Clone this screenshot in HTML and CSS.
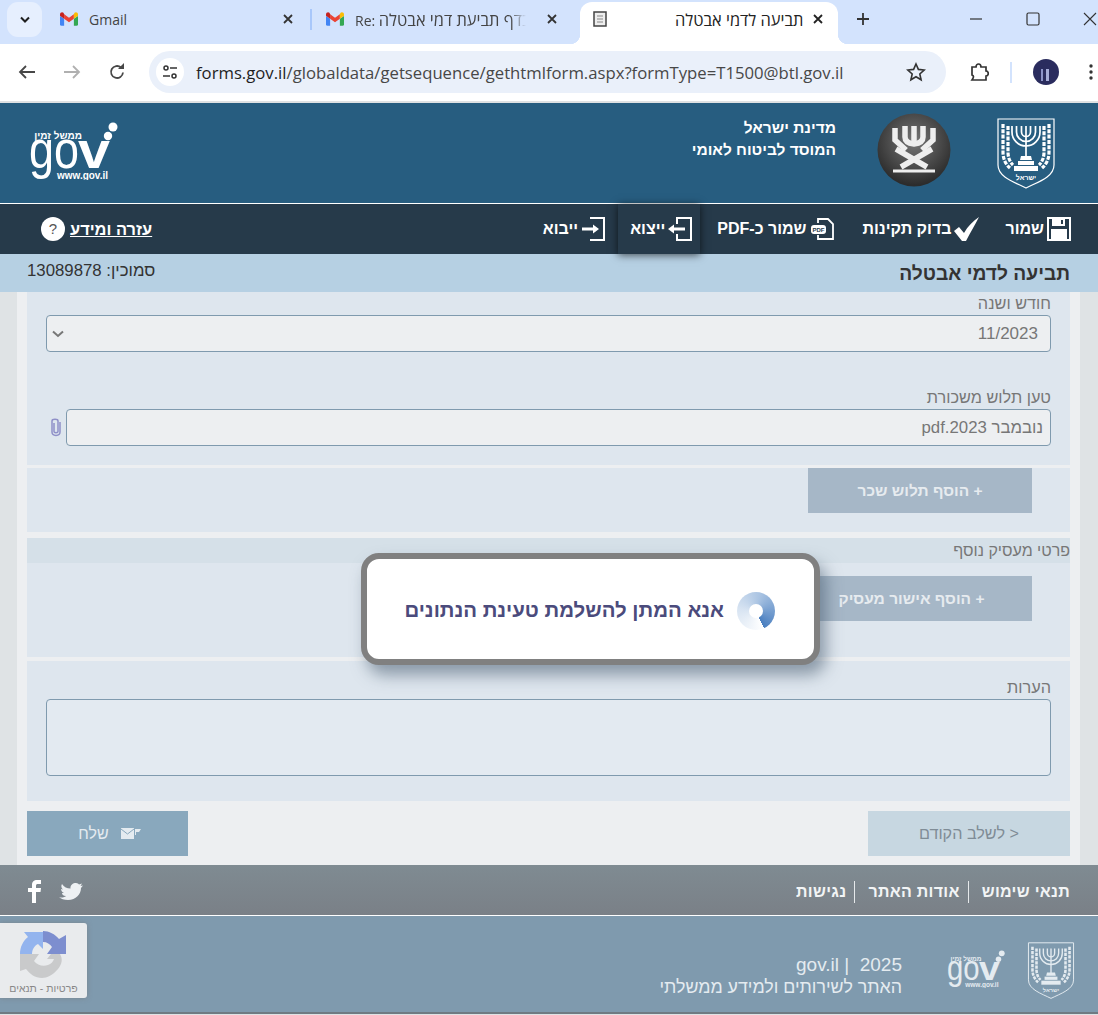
FILE: index.html
```html
<!DOCTYPE html>
<html lang="he">
<head>
    <meta charset="UTF-8">
    <title>תביעה לדמי אבטלה</title>
    <link rel="stylesheet" href="styles.css">
</head>
<body>
    <svg class="defs" width="0" height="0">
        <symbol id="emblem" viewBox="0 0 58 72">
            <path d="M1 1H57V47C57 59 41 64 29 70C17 64 1 59 1 47Z" fill="none" stroke="currentColor" stroke-width="1.2"/>
            <g fill="none" stroke="currentColor" stroke-width="1.7">
                <path d="M29 8V40"/>
                <path d="M24.500 8V14A4.500 4.500 0 0 0 33.500 14V8"/>
                <path d="M19.500 8V14A9.500 9.500 0 0 0 38.500 14V8"/>
                <path d="M15 8V14A14 14 0 0 0 43 14V8"/>
            </g>
            <g fill="none" stroke="currentColor" stroke-width="3.200" stroke-dasharray="4 1.300">
                <path d="M6 6V34Q6 44 13 50"/>
                <path d="M11 8V34Q11 42 16 47"/>
                <path d="M52 6V34Q52 44 45 50"/>
                <path d="M47 8V34Q47 42 42 47"/>
            </g>
            <g fill="currentColor">
                <path d="M24 38H34L35 42H23Z"/>
                <path d="M21 43H37V47H21Z"/>
                <path d="M17 48H41V53H17Z"/>
                <text x="29" y="62" class="emblem-text" text-anchor="middle">ישראל</text>
            </g>
        </symbol>
        <symbol id="gov" viewBox="0 0 89 58">
            <g fill="currentColor">
                <text x="0" y="46" class="gov-thin" textLength="50" lengthAdjust="spacingAndGlyphs">go</text>
                <text x="49" y="46" class="gov-bold" textLength="32" lengthAdjust="spacingAndGlyphs">v</text>
                <circle cx="79" cy="14" r="4.200"/>
                <circle cx="84" cy="5" r="4.500"/>
                <text x="53" y="17" class="gov-small">ממשל זמין</text>
                <text x="28" y="57" class="gov-www" textLength="51" lengthAdjust="spacingAndGlyphs">www.gov.il</text>
            </g>
        </symbol>
        <symbol id="gmail" viewBox="0 0 24 18">
            <path d="M0 5V16A2 2 0 0 0 2 18H5.500V8.500Z" fill="#4285f4"/>
            <path d="M24 5V16A2 2 0 0 1 22 18H18.500V8.500Z" fill="#34a853"/>
            <path d="M5.500 8.500 12 13.400 18.500 8.500V2.500L12 7.400 5.500 2.500Z" fill="#ea4335"/>
            <path d="M18.500 2.500V8.500L24 4.500V3C24 .5 21.200-.8 19.400.8Z" fill="#fbbc04"/>
            <path d="M5.500 2.500V8.500L0 4.500V3C0 .5 2.800-.8 4.600.8Z" fill="#c5221f"/>
        </symbol>
    </svg>

    <div class="browser">
        <div class="tabstrip">
            <div class="tab-search">
                <svg width="12" height="8" viewBox="0 0 12 8"><path d="M2 1.500 6 5.500 10 1.500" fill="none" stroke="#1f1f1f" stroke-width="2"/></svg>
            </div>
            <div class="tab tab-gmail">
                <svg class="tab-icon" width="18" height="14"><use href="#gmail"/></svg>
                <span class="tab-title">Gmail</span>
                <svg class="tab-close" width="10" height="10" viewBox="0 0 10 10"><path d="M1 1 9 9M9 1 1 9" stroke="#333" stroke-width="1.800"/></svg>
            </div>
            <div class="tab-sep"></div>
            <div class="tab tab-re">
                <svg class="tab-icon" width="18" height="14"><use href="#gmail"/></svg>
                <span class="tab-title">Re: <span class="tab-he">בדף תביעת דמי אבטלה</span></span>
                <svg class="tab-close" width="10" height="10" viewBox="0 0 10 10"><path d="M1 1 9 9M9 1 1 9" stroke="#333" stroke-width="1.800"/></svg>
            </div>
            <div class="tab tab-active">
                <svg class="tab-doc" width="14" height="16" viewBox="0 0 14 16"><path d="M1 1H13V15H1Z" fill="#eee" stroke="#444" stroke-width="1.500"/><path d="M4 5H10M4 8H10M4 11H10" stroke="#888"/></svg>
                <span class="tab-title tab-he tab-active-title">תביעה לדמי אבטלה</span>
                <svg class="tab-close" width="10" height="10" viewBox="0 0 10 10"><path d="M1 1 9 9M9 1 1 9" stroke="#222" stroke-width="1.800"/></svg>
            </div>
            <svg class="tab-plus" width="14" height="14" viewBox="0 0 14 14"><path d="M7 1V13M1 7H13" stroke="#333" stroke-width="1.800"/></svg>
            <div class="window-btns">
                <svg width="14" height="14" viewBox="0 0 14 14"><path d="M1 7H13" stroke="#333" stroke-width="1.200"/></svg>
                <svg width="14" height="14" viewBox="0 0 14 14"><rect x="1" y="1" width="12" height="12" rx="1.500" fill="none" stroke="#333" stroke-width="1.200"/></svg>
                <svg width="14" height="14" viewBox="0 0 14 14"><path d="M1 1 13 13M13 1 1 13" stroke="#333" stroke-width="1.100"/></svg>
            </div>
        </div>
        <div class="toolbar">
            <svg class="tool-back" width="18" height="16" viewBox="0 0 18 16"><path d="M17 8H2M8 2 2 8 8 14" fill="none" stroke="#474747" stroke-width="1.800"/></svg>
            <svg class="tool-fwd" width="18" height="16" viewBox="0 0 18 16"><path d="M1 8H16M10 2 16 8 10 14" fill="none" stroke="#b0b0b0" stroke-width="1.800"/></svg>
            <svg class="tool-reload" width="18" height="18" viewBox="0 0 18 18"><path d="M15 9.500A6 6 0 1 1 13 4.500" fill="none" stroke="#474747" stroke-width="1.800"/><path d="M10 6H16V0Z" fill="#474747"/></svg>
            <div class="omnibox">
                <div class="site-icon">
                    <svg width="16" height="16" viewBox="0 0 16 16"><g fill="none" stroke="#333" stroke-width="1.500"><circle cx="4" cy="4" r="2"/><path d="M8 4H15M1 12H8"/><circle cx="12" cy="12" r="2"/></g></svg>
                </div>
                <div class="url"><span class="url-host">forms.gov.il</span>/globaldata/getsequence/gethtmlform.aspx?formType=T1500@btl.gov.il</div>
                <svg class="star" width="20" height="20" viewBox="0 0 20 20"><path d="M10 2 12.400 7.400 18.200 8 13.800 12 15.100 17.800 10 14.800 4.900 17.800 6.200 12 1.800 8 7.600 7.400Z" fill="none" stroke="#333" stroke-width="1.600"/></svg>
            </div>
            <svg class="ext" width="20" height="20" viewBox="0 0 20 20"><path d="M3 5H7C7 1 12 1 12 5H17V9C20 9 20 14 17 14V18H3C5 15 5 14 3 13Z" fill="none" stroke="#333" stroke-width="1.700"/></svg>
            <div class="tool-sep"></div>
            <div class="avatar"></div>
            <svg class="menu-dots" width="4" height="18" viewBox="0 0 4 18"><circle cx="2" cy="3" r="1.700" fill="#333"/><circle cx="2" cy="9" r="1.700" fill="#333"/><circle cx="2" cy="15" r="1.700" fill="#333"/></svg>
        </div>
    </div>

    <div class="page" dir="rtl">
        <header class="site-header">
            <svg class="logo-emblem" width="58" height="72"><use href="#emblem"/></svg>
            <svg class="logo-btl" width="74" height="74" viewBox="0 0 74 74">
                <defs>
                    <radialGradient id="btlGrad" cx="50%" cy="38%" r="60%">
                        <stop offset="0" stop-color="#777"/>
                        <stop offset="1" stop-color="#2c2c2c"/>
                    </radialGradient>
                </defs>
                <circle cx="37" cy="37" r="36.500" fill="url(#btlGrad)"/>
                <g fill="none" stroke="#eee" stroke-width="5.500">
                    <path d="M18 15V27L29 37"/>
                    <path d="M56 15V27L45 37"/>
                    <path d="M37 13V29"/>
                    <path d="M28 13V24Q28 30 37 31Q46 30 46 24V13"/>
                    <path d="M19 36 50 54"/>
                    <path d="M55 36 24 54"/>
                </g>
                <path d="M16 58H58" stroke="#eee" stroke-width="3"/>
            </svg>
            <div class="org-name">
                <div>מדינת ישראל</div>
                <div>המוסד לביטוח לאומי</div>
            </div>
            <svg class="logo-gov" width="89" height="58"><use href="#gov"/></svg>
        </header>

        <nav class="actions">
            <a class="action action-save">
                <svg width="24" height="24" viewBox="0 0 24 24"><path d="M1 1H23V23H1Z" fill="none" stroke="#fff" stroke-width="2"/><path d="M5 1H18V9H5Z" fill="#fff"/><path d="M14 3H16V7H14Z" fill="#263a4a"/><path d="M4 12H20V22H4Z" fill="#fff"/></svg>
                שמור
            </a>
            <a class="action action-check">
                <svg width="26" height="26" viewBox="0 0 26 26"><path d="M0 15 5 11 10 17C14 10 19 5 25 1 21 9 16 17 12 25H8Z" fill="#fff"/></svg>
                בדוק תקינות
            </a>
            <a class="action action-pdf">
                <svg width="24" height="22" viewBox="0 0 24 22"><path d="M8 5V1H18L23 6V21H8V17" fill="none" stroke="#fff" stroke-width="1.800"/><rect x="1" y="7" width="15" height="9" rx="3" fill="#fff"/><text x="8.500" y="14" class="pdf-text" text-anchor="middle">PDF</text></svg>
                שמור כ-PDF
            </a>
            <a class="action action-export">
                <svg width="24" height="24" viewBox="0 0 24 24"><path d="M9 7V1H23V23H9V17" fill="none" stroke="#fff" stroke-width="2"/><path d="M0 12 6 7.500V10.500H17V13.500H6V16.500Z" fill="#fff"/></svg>
                ייצוא
            </a>
            <a class="action action-import">
                <svg width="24" height="24" viewBox="0 0 24 24"><path d="M9 1H23V23H9" fill="none" stroke="#fff" stroke-width="2"/><path d="M18 12 12 7.500V10.500H1V13.500H12V16.500Z" fill="#fff"/></svg>
                ייבוא
            </a>
            <a class="help"><span class="help-text">עזרה ומידע</span><span class="help-icon">?</span></a>
        </nav>

        <div class="title-bar">
            <h1>תביעה לדמי אבטלה</h1>
            <div class="ref-num">סמוכין: <span dir="ltr">13089878</span></div>
        </div>

        <main class="content">
            <section class="panel panel-fields">
                <label class="field-label">חודש ושנה</label>
                <div class="input input-select">
                    <span>11/2023</span>
                    <svg width="12" height="8" viewBox="0 0 12 8"><path d="M1 1.500 6 6 11 1.500" fill="none" stroke="#777" stroke-width="2"/></svg>
                </div>
                <label class="field-label field-second">טען תלוש משכורת</label>
                <div class="file-row">
                    <div class="input input-file">נובמבר 2023.pdf</div>
                    <svg class="clip" width="12" height="19" viewBox="0 0 12 19"><path d="M4 5V13.500C4 15 8 15 8 13.500V3C8 .8 2 .8 2 3V14C2 18.500 10 18.500 10 14V4" fill="none" stroke="#8f90c8" stroke-width="1.500"/></svg>
                </div>
            </section>

            <section class="panel panel-add">
                <div class="add-btn">+ הוסף תלוש שכר</div>
            </section>

            <h2 class="section-title">פרטי מעסיק נוסף</h2>
            <section class="panel panel-employer">
                <div class="add-btn add-btn-wide">+ הוסף אישור מעסיק</div>
            </section>

            <section class="panel panel-notes">
                <label class="field-label">הערות</label>
                <div class="textarea"></div>
            </section>

            <div class="form-btns">
                <div class="btn-prev">&lt; לשלב הקודם</div>
                <div class="btn-send">
                    <svg width="20" height="11" viewBox="0 0 20 11"><path d="M0 0H13V11H0Z" fill="#e4ebf0"/><path d="M0 1 6.500 6 13 1" fill="none" stroke="#89a8bd"/><path d="M14 1H20L18 4H15V7H14Z" fill="#e4ebf0"/></svg>
                    <span>שלח</span>
                </div>
            </div>
        </main>

        <div class="footer-links">
            <a>תנאי שימוש</a>
            <a>אודות האתר</a>
            <a>נגישות</a>
            <div class="social">
                <svg width="24" height="17" viewBox="0 0 24 17"><path d="M0 14C3 15 5 14.500 7 13 4 13 3 11 3 10H5C3 9 2 7.500 2 6L4 6.500C2 5 2 2.500 3 1 5 4 8 5.500 11.500 5.500 11 2 14 0 17 0 18.500 0 19.500 1 20 1.500L23 .5 21.500 3 24 2.500 22 5C22 11 17 17 9 17 5 17 2 16 0 14Z" fill="#eef1f3"/></svg>
                <svg width="13" height="23" viewBox="0 0 13 23"><path d="M4 23V12H0V8H4V5C4 1.500 6 0 9 0H13V4H10C8.500 4 8 4.500 8 6V8H13L12.500 12H8V23Z" fill="#fff"/></svg>
            </div>
        </div>

        <footer class="site-footer">
            <svg class="footer-emblem" width="48" height="58"><use href="#emblem"/></svg>
            <svg class="footer-gov" width="58" height="38"><use href="#gov"/></svg>
            <div class="footer-text">
                <div class="footer-year"><span dir="ltr">gov.il |&nbsp; 2025</span></div>
                <div>האתר לשירותים ולמידע ממשלתי</div>
            </div>
        </footer>
    </div>

    <div class="recaptcha">
        <svg width="46" height="47" viewBox="0 0 46 47">
            <path d="M0 23C0 16 3 10 8 6L4 1H23V18L18 13C14 15 12 19 12 23Z" fill="#93b4ee"/>
            <path d="M23 0C29 0 35 3 39 8L46 4V23H27L32 16C30 13 27 11 23 11Z" fill="#7d8ecf"/>
            <path d="M0 23H19L14 30C17 34 23 36 28 34 31 33 33 31 34 28H27L31 23H40C43 28 42 33 38 38 33 44 27 47 22 47 15 47 10 43 6 38L0 40Z" fill="#c9cacb"/>
        </svg>
        <div class="recaptcha-text" dir="rtl">פרטיות - תנאים</div>
    </div>

    <div class="loading" dir="rtl">
        <div class="spinner"></div>
        <div class="loading-text">אנא המתן להשלמת טעינת הנתונים</div>
    </div>
</body>
</html>
```

FILE: styles.css
```css
html, body {
    margin: 0;
    padding: 0;
    height: 1015px;
    overflow: hidden;
    background: #dfe3e5;
    font-family: "Liberation Sans", Arial, sans-serif;
}
.defs {
    position: absolute;
}

/* browser chrome */
.browser {
    height: 103px;
    background: #fff;
}
.tabstrip {
    display: flex;
    align-items: flex-start;
    height: 44px;
    background: #d3e3fd;
    overflow: hidden;
}
.tab-search {
    display: flex;
    align-items: center;
    justify-content: center;
    width: 35px;
    height: 35px;
    margin: 2px 0 0 7px;
    background: #e6effe;
    border-radius: 11px;
}
.tab {
    display: flex;
    align-items: center;
    height: 42px;
    margin-top: 2px;
    box-sizing: border-box;
    font-family: "Open Sans", "Liberation Sans", sans-serif;
    font-size: 14px;
    color: #444;
}
.tab-gmail {
    width: 235px;
    margin-left: 18px;
    padding: 0 2px 8px 0;
}
.tab-icon {
    flex: none;
}
.tab-title {
    margin-left: 11px;
    white-space: nowrap;
}
.tab-close {
    flex: none;
    margin-left: auto;
}
.tab-sep {
    width: 2px;
    height: 21px;
    margin: 9px 0 0 15px;
    background: #a8c7fa;
}
.tab-re {
    width: 241px;
    margin-left: 14px;
    padding: 0 10px 8px 0;
}
.tab-re .tab-title {
    width: 171px;
    overflow: hidden;
    -webkit-mask-image: linear-gradient(to left, transparent, #000 16px);
    mask-image: linear-gradient(to left, transparent, #000 16px);
}
.tab-active {
    position: relative;
    width: 258px;
    margin-left: 13px;
    padding: 0 15px 8px 13px;
    background: #fff;
    border-radius: 12px 12px 0 0;
    color: #222;
}
.tab-active::before,
.tab-active::after {
    content: "";
    position: absolute;
    bottom: 0;
    width: 10px;
    height: 10px;
}
.tab-active::before {
    left: -10px;
    background: radial-gradient(circle at 0 0, transparent 10px, #fff 10.500px);
}
.tab-active::after {
    right: -10px;
    background: radial-gradient(circle at 100% 0, transparent 10px, #fff 10.500px);
}
.tab-he {
    font-size: 16.400px;
}
.tab-active-title {
    margin-left: 68px;
}
.tab-plus {
    margin: 12px 0 0 18px;
}
.window-btns {
    display: flex;
    gap: 43px;
    margin: 12px 0 0 99px;
}
.window-btns svg {
    flex: none;
}
.toolbar {
    display: flex;
    align-items: center;
    height: 59px;
    padding-bottom: 1px;
    box-sizing: border-box;
    background: #fff;
    border-bottom: 2px solid #dfe1e3;
    overflow: hidden;
}
.tool-back {
    margin-left: 18px;
}
.tool-fwd {
    margin-left: 27px;
}
.tool-reload {
    margin-left: 27px;
}
.omnibox {
    display: flex;
    align-items: center;
    width: 797px;
    height: 42px;
    margin-left: 23px;
    box-sizing: border-box;
    padding: 0 20px 0 7px;
    background: #eaf0fa;
    border-radius: 21px;
}
.site-icon {
    display: flex;
    align-items: center;
    justify-content: center;
    width: 28px;
    height: 28px;
    background: #fff;
    border-radius: 50%;
}
.url {
    margin-left: 12px;
    font-family: "Open Sans", "Noto Sans", sans-serif;
    font-size: 16.700px;
    color: #474747;
    white-space: nowrap;
}
.url-host {
    color: #1f1f1f;
}
.star {
    margin-left: auto;
}
.ext {
    margin-left: 23px;
}
.tool-sep {
    width: 2px;
    height: 21px;
    margin-left: 21px;
    background: #d3e3fd;
}
.avatar {
    width: 26px;
    height: 26px;
    margin-left: 21px;
    border-radius: 50%;
    background:
        linear-gradient(90deg, transparent 30%, #8c93c8 30%, #8c93c8 40%, transparent 40%, transparent 50%, #a6add8 50%, #a6add8 60%, transparent 60%) 0 10px / 100% 12px no-repeat,
        #2a2c5e;
}
.menu-dots {
    margin-left: 30px;
}

/* site header */
.site-header {
    display: flex;
    align-items: center;
    height: 100px;
    padding: 0 43px 0 29px;
    background: #275d80;
    color: #fff;
}
.logo-emblem {
    flex: none;
    margin-top: 1px;
}
.logo-btl {
    flex: none;
    margin-right: 46px;
    margin-top: -6px;
}
.org-name {
    margin-right: 41px;
    margin-top: -29px;
    font-size: 15.500px;
    font-weight: bold;
    line-height: 22px;
}
.logo-gov {
    flex: none;
    margin-right: auto;
    margin-top: -5px;
}
.emblem-text {
    font-size: 7px;
    font-weight: bold;
}
.gov-thin {
    direction: ltr;
    font-family: "Liberation Sans", sans-serif;
    font-size: 54px;
}
.gov-bold {
    direction: ltr;
    font-weight: bold;
    font-size: 52px;
}
.gov-small {
    direction: rtl;
    font-size: 10px;
    font-weight: bold;
}
.gov-www {
    direction: ltr;
    font-size: 10px;
    font-weight: bold;
}
.pdf-text {
    direction: ltr;
    fill: #263a4a;
    font-size: 6px;
    font-weight: bold;
}

/* action bar */
.actions {
    display: flex;
    align-items: stretch;
    height: 50px;
    margin-top: 1px;
    padding: 0 27px 0 41px;
    background: #263a4a;
    box-shadow: 0 -1px 0 #fff;
    color: #fff;
    font-size: 16px;
    font-weight: bold;
}
.action {
    display: flex;
    align-items: center;
    gap: 3px;
    white-space: nowrap;
}
.action-check {
    margin-right: 25px;
}
.action-pdf {
    margin-right: 29px;
}
.action-export {
    margin-right: 17px;
    padding: 0 8px 0 12px;
    background: #263a4a;
    box-shadow: 0 1px 8px rgba(0, 0, 0, .65);
}
.action-import {
    margin-right: 13px;
}
.help {
    display: flex;
    align-items: center;
    gap: 5px;
    margin-right: auto;
    font-size: 16.400px;
}
.help-text {
    text-decoration: underline;
}
.help-icon {
    width: 24px;
    height: 24px;
    border-radius: 50%;
    background: #fff;
    color: #555;
    font-weight: normal;
    font-size: 15px;
    line-height: 24px;
    text-align: center;
}

/* title */
.title-bar {
    display: flex;
    justify-content: space-between;
    height: 38px;
    padding: 0 28px 0 27px;
    background: #b6d0e3;
    color: #333;
}
.title-bar h1 {
    margin: 9px 0 0;
    font-size: 19.200px;
    line-height: 22px;
}
.ref-num {
    margin-top: 7px;
    font-size: 16.800px;
    line-height: 20px;
}

/* form */
.content {
    height: 573px;
    box-sizing: border-box;
    margin: 0 18px 0 17px;
    padding: 0 10px;
    background: #edeff1;
}
.panel {
    background: #dee6ee;
    box-sizing: border-box;
}
.panel-fields {
    height: 173px;
    padding: 0 19px;
}
.field-label {
    display: block;
    height: 23px;
    font-size: 16.300px;
    line-height: 22px;
    color: #777;
}
.field-second {
    margin-top: 34px;
}
.input {
    height: 37px;
    box-sizing: border-box;
    padding: 0 12px;
    background: #edeff1;
    border: 1px solid #7f9aae;
    border-radius: 4px;
    font-size: 17px;
    line-height: 35px;
    color: #777;
}
.input-select {
    display: flex;
    justify-content: space-between;
    align-items: center;
    padding-left: 5px;
}
.file-row {
    display: flex;
    align-items: center;
}
.input-file {
    flex: 1;
    padding: 0 7px;
    font-size: 16.800px;
}
.clip {
    flex: none;
    width: 20px;
}
.panel-add {
    height: 64px;
    margin-top: 3px;
    padding-right: 38px;
}
.add-btn {
    width: 224px;
    height: 45px;
    background: #a6b7c7;
    color: #e6ebef;
    font-size: 15.500px;
    font-weight: bold;
    line-height: 45px;
    text-align: center;
}
.add-btn-wide {
    width: 241px;
}
.section-title {
    height: 25px;
    margin: 6px 0 0;
    background: #d5e0e8;
    color: #777;
    font-size: 16px;
    font-weight: normal;
    line-height: 25px;
}
.panel-employer {
    height: 94px;
    padding: 13px 38px 0 0;
}
.panel-notes {
    height: 140px;
    margin-top: 4px;
    padding: 15px 19px 0;
}
.textarea {
    height: 77px;
    box-sizing: border-box;
    background: #e3eaf1;
    border: 1px solid #7f9aae;
    border-radius: 4px;
}
.form-btns {
    display: flex;
    justify-content: space-between;
    margin-top: 10px;
}
.btn-prev {
    width: 202px;
    height: 45px;
    background: #c7d7e1;
    color: #7f8c96;
    font-size: 16.200px;
    line-height: 45px;
    text-align: center;
}
.btn-send {
    display: flex;
    align-items: center;
    justify-content: center;
    gap: 12px;
    width: 161px;
    height: 45px;
    padding-left: 4px;
    box-sizing: border-box;
    background: #89a8bd;
    color: #e4ebf0;
    font-size: 16px;
}

/* footers */
.footer-links {
    display: flex;
    align-items: center;
    height: 51px;
    padding: 3px 28px 0 28px;
    box-sizing: border-box;
    background: linear-gradient(#7f8b92, #7a8087);
    border-bottom: 1px solid #fff;
    color: #f2f4f5;
    font-size: 16px;
    font-weight: bold;
    letter-spacing: .3px;
}
.footer-links a {
    padding: 0 8px 0 13px;
    border-left: 1px solid #e6e9eb;
    line-height: 22px;
}
.footer-links a:first-child {
    padding-right: 0;
}
.footer-links a:nth-child(3) {
    border-left: 0;
}
.social {
    display: flex;
    align-items: center;
    gap: 18px;
    margin-right: auto;
}
.site-footer {
    display: flex;
    align-items: center;
    height: 98px;
    padding: 0 23px 0 0;
    box-sizing: border-box;
    background: #7f9aae;
    border-bottom: 2px solid #6f7a82;
    color: #e4ebf0;
}
.footer-emblem {
    flex: none;
    margin-top: 14px;
}
.footer-gov {
    flex: none;
    margin-right: 22px;
    margin-top: 10px;
}
.footer-text {
    margin-right: 45px;
    margin-top: 23px;
    font-size: 17.800px;
    line-height: 22px;
}
.footer-year {
    font-size: 19px;
}

/* things lying over the page */
.recaptcha {
    position: absolute;
    left: 0;
    top: 923px;
    width: 87px;
    height: 75px;
    padding-top: 8px;
    box-sizing: border-box;
    background: #e9ebed;
    border-radius: 0 3px 3px 0;
    box-shadow: 0 0 5px rgba(120, 120, 120, .6);
    text-align: center;
}
.recaptcha svg {
    display: block;
    margin-left: 20px;
}
.recaptcha-text {
    margin-top: 4px;
    font-size: 10.500px;
    color: #888;
}
.loading {
    position: absolute;
    left: 361px;
    top: 553px;
    display: flex;
    align-items: center;
    width: 459px;
    height: 112px;
    box-sizing: border-box;
    padding-right: 39px;
    background: #fff;
    border: 6px solid #808080;
    border-radius: 18px;
    box-shadow: 6px 10px 16px rgba(70, 90, 110, .55);
}
.spinner {
    position: relative;
    flex: none;
    width: 38px;
    height: 38px;
    margin-top: 4px;
    border-radius: 50%;
    background: conic-gradient(from 155deg, #fff 0, #d8e4f2 120deg, #a9c3e2 220deg, #4a7fc0 360deg);
}
.spinner::after {
    content: "";
    position: absolute;
    left: 12px;
    top: 12px;
    width: 14px;
    height: 14px;
    border-radius: 50%;
    background: #fff;
}
.loading-text {
    margin: 2px 13px 0 0;
    color: #4b4b7c;
    font-size: 20.400px;
    font-weight: bold;
    white-space: nowrap;
}
```
